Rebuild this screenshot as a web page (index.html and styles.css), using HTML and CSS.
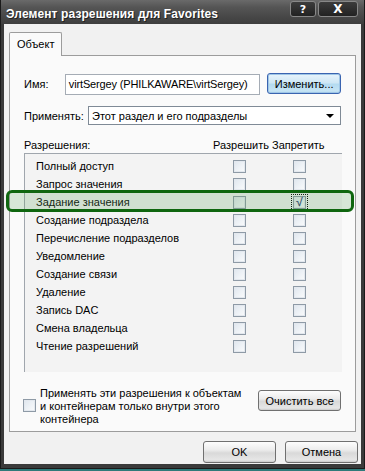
FILE: index.html
```html
<!DOCTYPE html>
<html>
<head>
<meta charset="utf-8">
<link rel="stylesheet" href="styles.css">
</head>
<body>
<div class="window">
  <div class="titlebar">
    <span class="title">Элемент разрешения для Favorites</span>
    <div class="tbtns">
      <span class="tbtn help">?</span>
      <span class="tbtn close">X</span>
    </div>
  </div>
  <div class="client">
    <div class="tabs"><span class="tab">Объект</span></div>
    <div class="panel">
      <div class="row name-row">
        <span class="lbl">Имя:</span>
        <span class="input">virtSergey (PHILKAWARE\virtSergey)</span>
        <span class="btn focus change">Изменить...</span>
      </div>
      <div class="row apply-row">
        <span class="lbl">Применять:</span>
        <span class="select"><span class="sel-text">Этот раздел и его подразделы</span><span class="arrow"></span></span>
      </div>
      <div class="hdr">
        <span class="hdr-name">Разрешения:</span>
        <span class="hdr-col">Разрешить</span>
        <span class="hdr-col deny">Запретить</span>
      </div>
      <div class="list">
        <div class="item"><span class="nm">Полный доступ</span><span class="cb"></span><span class="cb"></span></div>
        <div class="item"><span class="nm">Запрос значения</span><span class="cb"></span><span class="cb"></span></div>
        <div class="item"><span class="nm">Задание значения</span><span class="cb"></span><span class="cb checked"><span class="focusbox"></span>√</span></div>
        <div class="item"><span class="nm">Создание подраздела</span><span class="cb"></span><span class="cb"></span></div>
        <div class="item"><span class="nm">Перечисление подразделов</span><span class="cb"></span><span class="cb"></span></div>
        <div class="item"><span class="nm">Уведомление</span><span class="cb"></span><span class="cb"></span></div>
        <div class="item"><span class="nm">Создание связи</span><span class="cb"></span><span class="cb"></span></div>
        <div class="item"><span class="nm">Удаление</span><span class="cb"></span><span class="cb"></span></div>
        <div class="item"><span class="nm">Запись DAC</span><span class="cb"></span><span class="cb"></span></div>
        <div class="item"><span class="nm">Смена владельца</span><span class="cb"></span><span class="cb"></span></div>
        <div class="item"><span class="nm">Чтение разрешений</span><span class="cb"></span><span class="cb"></span></div>
      </div>
      <div class="bottom">
        <span class="cb single"></span>
        <span class="note">Применять эти разрешения к объектам<br>и контейнерам только внутри этого<br>контейнера</span>
        <span class="btn clear">Очистить все</span>
      </div>
    </div>
    <div class="actions">
      <span class="btn dlg">OK</span>
      <span class="btn dlg">Отмена</span>
    </div>
  </div>
  <div class="highlight"></div>
</div>
</body>
</html>
```

FILE: styles.css
```css
* { box-sizing: border-box; }
html, body { margin: 0; padding: 0; }
body {
  width: 365px; height: 471px; overflow: hidden;
  font-family: "Liberation Sans", Arial, sans-serif;
  font-size: 11px; color: #000;
  background: #2f7a7a;
}
.window {
  position: relative;
  width: 365px; height: 469px;
  background: #3a3a3a;
  border-left: 1px solid #1a1a1a;
  border-right: 1px solid #1a1a1a;
  border-bottom: 1px solid #1a1a1a;
  padding: 0 3px 4px 3px;
  display: flex; flex-direction: column;
}
.titlebar {
  height: 24px; flex: none;
  margin: 0 -3px;
  padding: 0 6px 0 5px;
  background: linear-gradient(#6a6a6a, #555 30%, #474747 70%, #3e3e3e);
  display: flex; align-items: center; justify-content: space-between;
}
.title {
  color: #fff; font-weight: bold; font-size: 12px;
  font-family: "Liberation Sans", sans-serif;
  letter-spacing: 0.1px;
  margin-top: 4px;
  text-shadow: 1px 1px 0 #222;
}
.tbtns { display: flex; gap: 2px; align-self: flex-start; margin-top: 1px; }
.tbtn {
  height: 16px; display: flex; align-items: center; justify-content: center;
  color: #fff; font-weight: bold; font-family: "DejaVu Sans", sans-serif;
  background: linear-gradient(#3c3c3c, #222);
  border: 1px solid #888; border-radius: 3px;
}
.help { width: 26px; font-size: 11px; }
.close { width: 40px; font-size: 12px; }
.client {
  flex: 1;
  background: #f1f1f1;
  padding: 8px 3px 0 5px;
  display: flex; flex-direction: column;
}
.tabs { display: flex; height: 23px; }
.tab {
  width: 53px; height: 24px;
  background: #fafafa;
  border: 1px solid #9c9c9c; border-bottom: none;
  border-radius: 2px 2px 0 0;
  padding: 5px 0 0 7px;
  position: relative; z-index: 1;
}
.panel {
  width: 347px; height: 377px;
  background: #fafafa;
  border: 1px solid #9c9c9c;
  padding: 17px 14px 0 14px;
  display: flex; flex-direction: column;
}
.row { display: flex; align-items: center; }
.name-row { height: 22px; }
.name-row .lbl { width: 41px; }
.input {
  width: 196px; height: 21px;
  border: 1px solid #a5acb5; background: #fff;
  padding: 3px 0 0 3px;
  letter-spacing: -0.15px;
  white-space: nowrap; overflow: hidden;
}
.btn {
  display: flex; align-items: center; justify-content: center;
  border: 1px solid #707070; border-radius: 3px;
  background: linear-gradient(#fdfdfd, #ececec 40%, #d9d9d9 55%, #e6e6e6 90%, #c9c9c9);
}
.change { width: 74px; height: 21px; margin-left: 7px; margin-top: -1px; }
.btn.focus {
  border-color: #3a64b0;
  background: linear-gradient(#e8f4fb, #cfe7f5 45%, #b4dbf0 55%, #c6e4f4 90%, #a9d1ea);
  box-shadow: inset 0 0 0 1px #9fc6e6;
}
.apply-row { margin-top: 11px; height: 19px; }
.apply-row .lbl { width: 64px; }
.select {
  width: 253px; height: 19px;
  border: 1px solid #7f8a96; background: #fff;
  display: flex; align-items: center; justify-content: space-between;
  padding: 0 6px 0 3px;
}
.arrow {
  width: 0; height: 0;
  border-left: 4px solid transparent; border-right: 4px solid transparent;
  border-top: 4px solid #000;
}
.hdr { display: flex; margin-top: 12px; height: 15px; align-items: center; }
.hdr-name { width: 189px; }
.hdr-col { width: 59px; }
.list {
  width: 318px; height: 219px;
  border: 1px solid #a0a6ad; border-right: none; border-bottom: none;
  background: #f3f3f3;
  padding-top: 3px;
  margin-top: 1px;
}
.item { display: flex; align-items: center; height: 18px; }
.nm { width: 208px; padding-left: 11px; }
.cb {
  flex: none;
  width: 13px; height: 13px;
  border: 1px solid #8e9aa6;
  background: linear-gradient(135deg, #dfe6ee, #eef2f6 55%, #fafbfc);
  box-shadow: inset 0 0 0 1px #e3e8ee;
  position: relative;
}
.item .cb + .cb { margin-left: 47px; }
.cb.checked {
  font-size: 12px; line-height: 11px; text-align: center; color: #3a4a78;
  font-weight: bold;
}
.focusbox {
  position: absolute; left: -3px; top: -3px; right: -3px; bottom: -3px;
  border: 1px dotted #000;
}
.bottom { display: flex; margin-top: 15px; align-items: flex-start; }
.single { margin-top: 12px; margin-right: 4px; margin-left: -1px; }
.note { line-height: 13px; width: 222px; }
.clear { width: 83px; height: 21px; margin-top: 3px; margin-left: -3px; }
.actions { display: flex; justify-content: flex-end; gap: 9px; margin-top: 9px; }
.dlg { width: 73px; height: 22px; }
.highlight {
  position: absolute; left: 5px; top: 190px; width: 348px; height: 22px;
  border: 3px solid #0f660f; border-radius: 6px;
  background: rgba(90, 160, 90, 0.22);
}
```
